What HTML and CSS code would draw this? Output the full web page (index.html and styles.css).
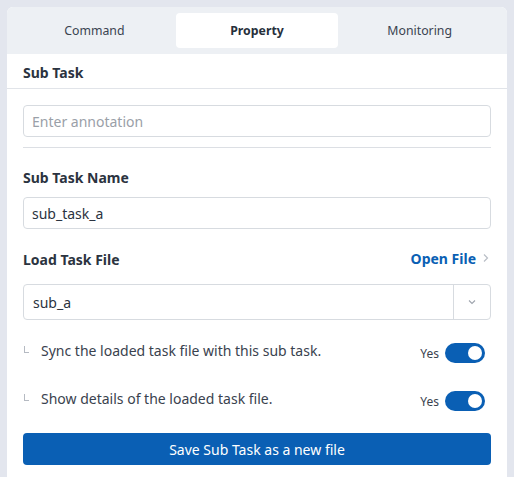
FILE: index.html
```html
<!DOCTYPE html>
<html>
<head>
<meta charset="utf-8">
<link rel="stylesheet" href="styles.css">
</head>
<body>
<div class="panel">
  <div class="tabs">
    <div class="tab">Command</div>
    <div class="tab active">Property</div>
    <div class="tab">Monitoring</div>
  </div>
  <div class="section-head">Sub Task</div>
  <div class="content">
    <div class="input placeholder">Enter annotation</div>
    <div class="divider"></div>
    <div class="label">Sub Task Name</div>
    <div class="input">sub_task_a</div>
    <div class="label-row">
      <div class="label">Load Task File</div>
      <div class="open-file">Open File
        <svg width="8" height="10" viewBox="0 0 8 10"><path d="M2 1.5 L5.5 5 L2 8.5" fill="none" stroke="#b9bec6" stroke-width="1.2"/></svg>
      </div>
    </div>
    <div class="select">
      <div class="select-value">sub_a</div>
      <div class="select-btn">
        <svg width="10" height="6" viewBox="0 0 10 6"><path d="M2 1.5 L5 4.5 L8 1.5" fill="none" stroke="#9ea4ad" stroke-width="1.1"/></svg>
      </div>
    </div>
    <div class="opt-row">
      <span class="elbow"></span>
      <span class="opt-text">Sync the loaded task file with this sub task.</span>
      <span class="yes">Yes</span>
      <span class="toggle"><span class="knob"></span></span>
    </div>
    <div class="opt-row">
      <span class="elbow"></span>
      <span class="opt-text">Show details of the loaded task file.</span>
      <span class="yes">Yes</span>
      <span class="toggle"><span class="knob"></span></span>
    </div>
    <div class="button">Save Sub Task as a new file</div>
  </div>
</div>
</body>
</html>
```

FILE: styles.css
```css
html, body {
  margin: 0;
  padding: 0;
}
body {
  background: #e3e6ee;
  padding: 7px 7px 0 7px;
  font-family: "Noto Sans", "Open Sans", sans-serif;
  color: #2b3340;
  height: 477px;
  box-sizing: border-box;
  overflow: hidden;
}
.panel {
  background: #ffffff;
  border-radius: 6px 6px 0 0;
  overflow: hidden;
  height: 480px;
}
.tabs {
  background: #edf0f4;
  display: flex;
  padding: 6px 6px 6px 6px;
  height: 47px;
  box-sizing: border-box;
}
.tab {
  flex: 1;
  display: flex;
  align-items: center;
  justify-content: center;
  font-size: 12.3px;
  color: #3a4350;
  border-radius: 4px;
  padding-bottom: 1px;
}
.tab.active {
  background: #ffffff;
  font-weight: 700;
  color: #27303c;
}
.section-head {
  height: 35px;
  box-sizing: border-box;
  border-bottom: 1px solid #e1e4e9;
  padding: 0 16px;
  display: flex;
  align-items: center;
  font-size: 14px;
  font-weight: 700;
  color: #2b3340;
  padding-top: 2px;
}
.content {
  padding: 16px 16px 0 16px;
  display: flex;
  flex-direction: column;
}
.input {
  height: 32px;
  box-sizing: border-box;
  border: 1px solid #d7dbe0;
  border-radius: 4px;
  padding: 0 8px;
  display: flex;
  align-items: center;
  font-size: 14px;
  color: #2b3340;
}
.input.placeholder {
  color: #9aa0a8;
}
.divider {
  height: 1px;
  background: #dcdfe4;
  margin: 10px 0 0 0;
}
.label {
  font-size: 14px;
  font-weight: 700;
  color: #2b3340;
  margin: 20px 0 9px 0;
  line-height: 20px;
}
.label-row {
  display: flex;
  align-items: center;
  justify-content: space-between;
  margin: 21px 0 14px 0;
}
.label-row .label {
  margin: 0;
}
.open-file {
  display: flex;
  align-items: center;
  gap: 6px;
  font-size: 14px;
  font-weight: 700;
  color: #0a5fb4;
  margin-top: -4px;
  margin-right: 1px;
}
.select {
  height: 36px;
  box-sizing: border-box;
  border: 1px solid #d7dbe0;
  border-radius: 4px;
  display: flex;
}
.select-value {
  flex: 1;
  display: flex;
  align-items: center;
  padding: 0 9px;
  font-size: 14px;
}
.select-btn {
  width: 36px;
  border-left: 1px solid #d7dbe0;
  display: flex;
  align-items: center;
  justify-content: center;
}
.opt-row {
  display: flex;
  align-items: center;
  height: 20px;
  margin-top: 22px;
  font-size: 14px;
}
.opt-row + .opt-row {
  margin-top: 28px;
}
.elbow {
  width: 4px;
  height: 6px;
  border-left: 1px solid #b5bac2;
  border-bottom: 1px solid #b5bac2;
  margin: -6px 12px 0 1px;
}
.opt-text {
  flex: 1;
  color: #3a424e;
  margin-top: -4px;
}
.yes {
  font-size: 12px;
  color: #3a424e;
  margin: 0 6px 0 0;
  padding-top: 3px;
}
.toggle {
  width: 40px;
  height: 20px;
  border-radius: 10px;
  background: #0a5fb4;
  position: relative;
  margin-right: 6px;
  margin-top: 2px;
}
.knob {
  position: absolute;
  right: 3px;
  top: 3px;
  width: 14px;
  height: 14px;
  border-radius: 50%;
  background: #ffffff;
}
.button {
  margin-top: 23px;
  height: 32px;
  background: #0a5fb4;
  color: #ffffff;
  border-radius: 4px;
  display: flex;
  align-items: center;
  justify-content: center;
  font-size: 14px;
}
```
